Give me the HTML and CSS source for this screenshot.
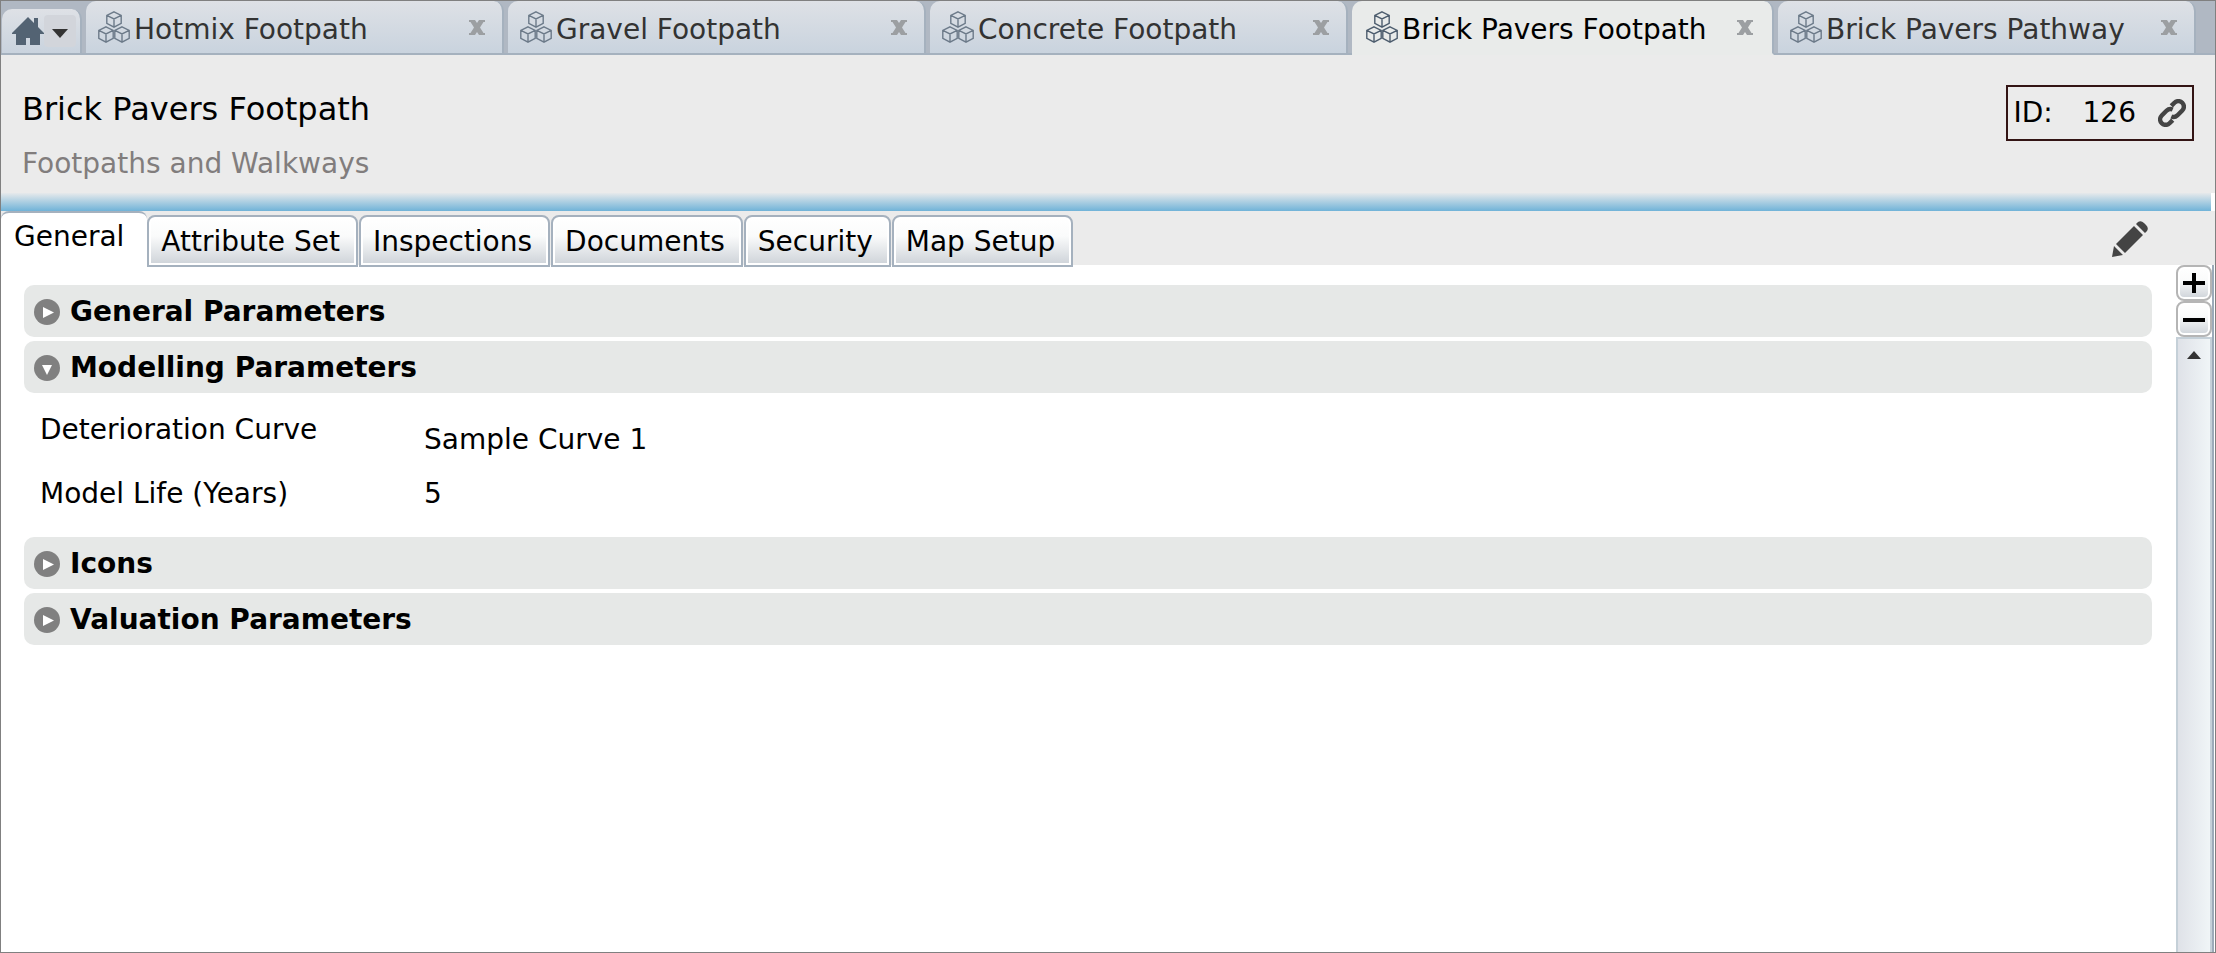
FILE: index.html
```html
<!DOCTYPE html>
<html lang="en">
<head>
    <meta charset="UTF-8">
    <title>Brick Pavers Footpath</title>
    <link rel="stylesheet" href="styles.css">
</head>
<body>
<svg class="sprite">
    <symbol id="cube" viewBox="0 0 16 17">
        <path d="M8 0.8 L15.2 4.4 V12.4 L8 16.2 L0.8 12.4 V4.4 Z M0.8 4.4 L8 8 L15.2 4.4 M8 8 V16.2"/>
    </symbol>
    <symbol id="cubes" viewBox="0 0 32 32">
        <use href="#cube" x="8" y="0" width="16" height="17"/>
        <use href="#cube" x="0" y="15" width="16" height="17"/>
        <use href="#cube" x="16" y="15" width="16" height="17"/>
    </symbol>
    <symbol id="cross" viewBox="0 0 16 15">
        <path d="M0 0 H6 L8 3 L10 0 H16 V2 H14.500 L11 7.500 L14.500 13 H16 V15 H10 L8 12 L6 15 H0 V13 H1.500 L5 7.500 L1.500 2 H0 Z"/>
    </symbol>
</svg>
<div class="window">
    <nav class="window-tabs">
        <div class="home-tab">
            <button class="home" aria-label="Home">
                <svg width="32" height="28" viewBox="0 0 32 28"><path d="M16 0 L22 6 V1 H26 V10 L32 16 V17 H28 V28 H18 V21 H14 V28 H4 V17 H0 V16 Z"/></svg>
            </button>
            <button class="home-menu" aria-label="Open menu">
                <svg width="16" height="9" viewBox="0 0 16 9"><path d="M0 0 H16 L8 9 Z"/></svg>
            </button>
        </div>
        <div class="window-tab">
            <svg class="cubes"><use href="#cubes"/></svg>
            <a href="#">Hotmix Footpath</a>
            <button class="close" aria-label="Close"><svg width="16" height="15"><use href="#cross"/></svg></button>
        </div>
        <div class="window-tab">
            <svg class="cubes"><use href="#cubes"/></svg>
            <a href="#">Gravel Footpath</a>
            <button class="close" aria-label="Close"><svg width="16" height="15"><use href="#cross"/></svg></button>
        </div>
        <div class="window-tab">
            <svg class="cubes"><use href="#cubes"/></svg>
            <a href="#">Concrete Footpath</a>
            <button class="close" aria-label="Close"><svg width="16" height="15"><use href="#cross"/></svg></button>
        </div>
        <div class="window-tab active">
            <svg class="cubes"><use href="#cubes"/></svg>
            <a href="#">Brick Pavers Footpath</a>
            <button class="close" aria-label="Close"><svg width="16" height="15"><use href="#cross"/></svg></button>
        </div>
        <div class="window-tab">
            <svg class="cubes"><use href="#cubes"/></svg>
            <a href="#">Brick Pavers Pathway</a>
            <button class="close" aria-label="Close"><svg width="16" height="15"><use href="#cross"/></svg></button>
        </div>
    </nav>

    <header class="header">
        <div>
            <h1>Brick Pavers Footpath</h1>
            <p class="category">Footpaths and Walkways</p>
        </div>
        <div class="id-box">
            <span class="id-label">ID:</span>
            <span>126</span>
            <a class="link" href="#" aria-label="Copy link">
                <svg width="28" height="28" viewBox="0 0 28 28">
                    <g transform="rotate(-45 14 14)">
                        <path d="M18.500 8.500 H23 A5.500 5.500 0 0 1 23 19.500 H16 A5.500 5.500 0 0 1 11 16"/>
                        <path d="M9.500 19.500 H5 A5.500 5.500 0 0 1 5 8.500 H12 A5.500 5.500 0 0 1 17 12"/>
                    </g>
                </svg>
            </a>
        </div>
    </header>
    <div class="divider"></div>

    <div class="page-bar">
        <nav class="page-tabs">
            <button class="page-tab active">General</button>
            <button class="page-tab">Attribute Set</button>
            <button class="page-tab">Inspections</button>
            <button class="page-tab">Documents</button>
            <button class="page-tab">Security</button>
            <button class="page-tab">Map Setup</button>
        </nav>
        <button class="edit" aria-label="Edit">
            <svg width="36" height="36" viewBox="0 0 36 36"><path d="M0 36 L2 25 L11 34 Z M4 23 L22 5 L31 14 L13 32 Z M24 3 L26 1 Q29 -1 32 2 L34 4 Q37 7 35 10 L33 12 Z"/></svg>
        </button>
    </div>

    <div class="content">
        <main class="sections">
            <button class="section-title">
                <svg class="toggle" viewBox="0 0 26 26"><circle cx="13" cy="13" r="13"/><path d="M9 8 L20 13.500 L9 19 Z"/></svg>
                General Parameters
            </button>
            <button class="section-title">
                <svg class="toggle" viewBox="0 0 26 26"><circle cx="13" cy="13" r="13"/><path d="M8 10 H18 L13 20 Z"/></svg>
                Modelling Parameters
            </button>
            <dl class="fields">
                <dt>Deterioration Curve</dt>
                <dd class="curve">Sample Curve 1</dd>
                <dt>Model Life (Years)</dt>
                <dd>5</dd>
            </dl>
            <button class="section-title">
                <svg class="toggle" viewBox="0 0 26 26"><circle cx="13" cy="13" r="13"/><path d="M9 8 L20 13.500 L9 19 Z"/></svg>
                Icons
            </button>
            <button class="section-title">
                <svg class="toggle" viewBox="0 0 26 26"><circle cx="13" cy="13" r="13"/><path d="M9 8 L20 13.500 L9 19 Z"/></svg>
                Valuation Parameters
            </button>
        </main>
        <aside class="side">
            <button class="zoom" aria-label="Expand all"><svg width="22" height="20" viewBox="0 0 22 20"><path d="M0 8 H9 V0 H13 V8 H22 V12 H13 V20 H9 V12 H0 Z"/></svg></button>
            <button class="zoom" aria-label="Collapse all"><svg width="22" height="20" viewBox="0 0 22 20"><path d="M0 9 H22 V13 H0 Z"/></svg></button>
            <div class="scrollbar">
                <button class="scroll-up" aria-label="Scroll up"><svg width="14" height="8" viewBox="0 0 14 8"><path d="M7 0 L14 8 H0 Z"/></svg></button>
            </div>
        </aside>
    </div>
</div>
</body>
</html>
```
FILE: styles.css
```css
* {
    box-sizing: border-box;
}

body {
    font-family: Verdana, "DejaVu Sans", sans-serif;
    font-size: 28px;
    line-height: 34px;

    margin: 0;

    color: black;
}

button {
    font: inherit;

    padding: 0;

    color: inherit;
    border: none;
    background: none;
}

a {
    text-decoration: none;

    color: inherit;
}

svg {
    display: block;
    flex-shrink: 0;
}

.sprite {
    display: none;
}

.window {
    display: flex;
    flex-direction: column;

    min-height: 100vh;

    border: 1px solid #808080;
    background-color: white;
}

/* window tabs */

.window-tabs {
    display: flex;
    align-items: flex-end;

    height: 54px;
    padding: 0 19px 0 1px;

    background: linear-gradient(to top, #a5b1be 2px, #b0b8c3 2px);
}

.home-tab {
    display: flex;
    align-items: center;

    height: 46px;
    margin-right: 4px;
    padding: 0 4px 0 10px;

    border: solid #a5b1be;
    border-width: 0 2px 2px 0;
    border-radius: 10px 10px 0 0;
    background: linear-gradient(#dee1e6, #c9d3de);
}

.home {
    fill: #536373;
}

.home-menu {
    display: flex;
    align-items: center;
    justify-content: center;

    width: 32px;
    height: 32px;
    padding-top: 4px;

    border-radius: 4px;
    background-color: #d2d5db;

    fill: #333;
}

.window-tab {
    display: flex;
    align-items: center;
    flex: 1;

    height: 54px;
    padding: 0 15px 0 12px;

    color: #333;
    border: solid #a5b1be;
    border-width: 0 2px 2px 0;
    border-radius: 10px 10px 0 0;
    background: linear-gradient(#dee1e6, #c9d3de);
}

.window-tab + .window-tab {
    margin-left: 4px;
}

.window-tab a {
    padding-top: 6px;
}

.window-tab.active {
    padding: 0 17px 0 14px;

    color: black;
    border-color: #a5b1be;
    border-bottom-color: #e9ebea;
    background: #e9ebea;
}

.cubes {
    width: 32px;
    height: 32px;
    margin-right: 4px;

    fill: none;
    stroke: #6c7a89;
    stroke-width: 1.400;
}

.active .cubes {
    stroke: #4d5d6e;
}

.close {
    margin-left: auto;
    padding: 0 2px;

    fill: #9c9fa2;
}

/* header */

.header {
    display: flex;
    align-items: flex-start;
    justify-content: space-between;

    height: 138px;
    padding: 30px 21px 0 21px;

    background-color: #ebebeb;
}

h1 {
    font-size: 32px;
    font-weight: normal;
    line-height: 48px;

    margin: 0;
}

.category {
    margin: 14px 0 0;

    color: #817d7d;
}

.id-box {
    display: flex;
    align-items: center;

    height: 56px;
    padding: 0 6px;

    border: 2px solid #331414;

    gap: 22px;
}

.id-label {
    min-width: 47px;
}

.link {
    fill: none;
    stroke: #444;
    stroke-width: 4.500;
}

.divider {
    height: 18px;
    margin-right: 4px;

    background: linear-gradient(#e6e9eb, #70b3d8);
}

/* page tabs */

.page-bar {
    display: flex;
    align-items: flex-start;
    justify-content: space-between;

    height: 54px;
    padding-right: 67px;

    background-color: #ebebeb;
}

.page-tabs {
    display: flex;
    align-items: flex-end;

    height: 56px;
}

.page-tab {
    height: 52px;
    margin-right: 1px;
    padding: 2px 16px 0 12px;

    border: 2px solid #a5b1be;
    border-radius: 8px 8px 0 0;
    background: linear-gradient(#fff, #fafbfb 40%, #cdd2d8) padding-box;
    box-shadow: inset 0 0 0 2px white;
}

.page-tab.active {
    height: 56px;
    margin-right: 0;
    padding: 0 23px 6px 13px;

    border-width: 2px 0 0;
    background: white;
}

.edit {
    margin-top: 10px;

    fill: #444;
}

/* content */

.content {
    display: flex;
    flex: 1;
}

.sections {
    display: flex;
    flex: 1;
    flex-direction: column;

    padding: 20px 24px 20px 23px;

    gap: 4px;
}

.section-title {
    font-weight: bold;

    display: flex;
    align-items: center;

    height: 52px;
    padding: 2px 10px 0;

    border-radius: 10px;
    background-color: #e6e8e7;

    gap: 10px;
}

.toggle {
    width: 26px;
    height: 26px;

    fill: #808080;
}

.toggle path {
    fill: white;
}

.fields {
    display: grid;

    height: 136px;
    margin: 0;
    padding: 16px 16px 0;

    grid-template-columns: 384px 1fr;
    grid-template-rows: 64px 1fr;
}

.fields dd {
    margin: 0;
}

.fields .curve {
    padding-top: 10px;
}

.side {
    display: flex;
    flex-direction: column;

    width: 38px;
    margin-right: 1px;

    border-right: 2px solid #9caab8;
}

.zoom {
    display: flex;
    align-items: center;
    justify-content: center;

    height: 36px;

    border: 2px solid #b5b5b5;
    border-radius: 8px;
    background: linear-gradient(#fff, #fafbfb 40%, #cdd2d8) padding-box;
    box-shadow: inset 0 0 0 2px white;
}

.scrollbar {
    flex: 1;

    border: solid #c5d0d8;
    border-width: 2px 2px 0;
    background: linear-gradient(to right, #dfe2e8, #f0f5f7);
}

.scroll-up {
    display: flex;
    justify-content: center;

    width: 100%;
    padding-top: 12px;

    fill: #333;
}
```
